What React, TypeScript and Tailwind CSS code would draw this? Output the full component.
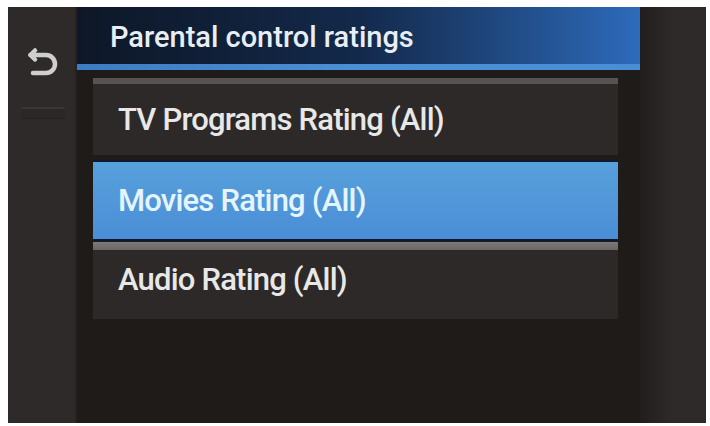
export default function App() {
  const items = [
    { label: 'TV Programs Rating (All)', selected: false },
    { label: 'Movies Rating (All)', selected: true },
    { label: 'Audio Rating (All)', selected: false },
  ];

  return (
    <div className="w-[710px] h-[426px] bg-white pl-[8px] pt-[7px] pr-[4px] pb-[3px] overflow-hidden">
      <div className="flex h-full w-full bg-[#1f1b19] font-['Roboto',sans-serif]">
        {/* Left rail */}
        <div className="w-[69px] shrink-0 bg-[#2e2a29] flex flex-col items-center border-r-[2px] border-[#262221]">
          <svg
            className="mt-[40px] ml-[4px]"
            width="36"
            height="30"
            viewBox="0 0 36 30"
            fill="none"
            stroke="#cfcfcf"
            strokeWidth="4.5"
            strokeLinecap="round"
            strokeLinejoin="round"
          >
            <path d="M9 3.5 L4.5 8 L9 12.5" />
            <path d="M4.5 8 H20 a9 9 0 0 1 0 18 H7" />
          </svg>
          <div className="mt-[30px] ml-[2px] w-[44px] h-[11px] rounded-[3px] bg-[#2b2726] border-t-[2px] border-[#3a3635] shadow-[0_1px_0_#232020]" />
        </div>

        {/* Main column */}
        <div className="w-[563px] shrink-0 flex flex-col">
          <div className="h-[57px] bg-linear-to-r from-[#0d1727] via-[#13294b] to-[#2d6bbb] flex items-center pl-[33px] pt-[3px]">
            <span className="text-[29px] font-medium text-[#e9eef5] whitespace-nowrap leading-none">
              Parental control ratings
            </span>
          </div>
          <div className="h-[6px] bg-linear-to-r from-[#3c7cc4] via-[#4b8fd6] to-[#4a8ed8]" />

          <div className="flex flex-col pl-[16px] pr-[22px] pt-[8px]">
            {items.map((item, i) =>
              item.selected ? (
                <div
                  key={i}
                  className="h-[81px] border-y-[2px] border-[#0c1a32] bg-linear-to-b from-[#58a0dc] to-[#4a8ed6] flex items-center pl-[25px] mb-[1px]"
                >
                  <span className="text-[31px] font-medium text-[#e4f5ff] tracking-[-0.8px] whitespace-nowrap leading-none">
                    {item.label}
                  </span>
                </div>
              ) : (
                <div key={i} className={i === 0 ? 'mb-[5px]' : ''}>
                  <div className={i === 0 ? 'h-[6px] bg-[#575352]' : 'h-[8px] bg-linear-to-b from-[#7d7978] to-[#6a6665]'} />
                  <div
                    className={
                      (i === 0 ? 'h-[71px]' : 'h-[69px] pb-[10px]') +
                      ' bg-[#2c2928] flex items-center pl-[25px]'
                    }
                  >
                    <span className="text-[31px] font-medium text-[#e8e8e8] tracking-[-0.8px] whitespace-nowrap leading-none">
                      {item.label}
                    </span>
                  </div>
                </div>
              )
            )}
          </div>
        </div>

        {/* Right rail */}
        <div className="flex-1 bg-linear-to-r from-[#221e1d] via-[#2e2a2a] to-[#2e2a2a]" />
      </div>
    </div>
  );
}
